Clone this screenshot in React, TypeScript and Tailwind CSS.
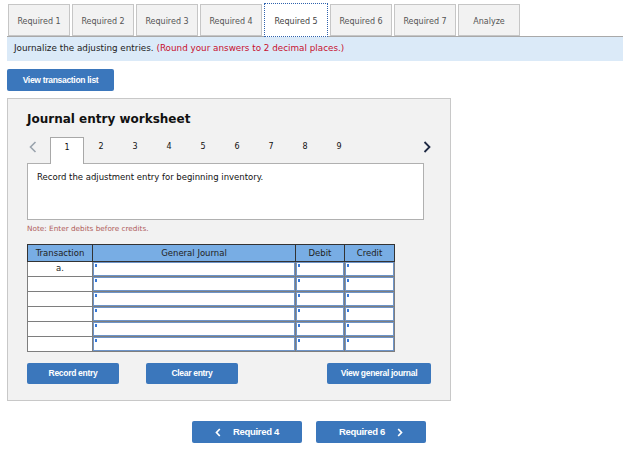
import React from 'react'

const TABS = ['Required 1', 'Required 2', 'Required 3', 'Required 4', 'Required 5', 'Required 6', 'Required 7', 'Analyze']
const ACTIVE_TAB = 4
const ENTRY_NUMS = [1, 2, 3, 4, 5, 6, 7, 8, 9]
const ROWS = ['a.', '', '', '', '', '']

const FONT = { fontFamily: '"DejaVu Sans", Verdana, sans-serif' }

function InputCell() {
  return (
    <td className="border border-[#7e7e7e] p-0 h-[15px]">
      <div className="relative h-[14px] border border-[#6d94c9] bg-white">
        <span className="absolute left-[1px] top-[1px] w-[2px] h-[3px] bg-[#3a79d6]" />
      </div>
    </td>
  )
}

function BlueButton({ label, className }: { label: string; className: string }) {
  return (
    <button
      className={`bg-[#3b77bc] text-white font-bold text-[8.5px] tracking-[-0.3px] rounded-[2px] flex items-center justify-center ${className}`}
      style={{ fontFamily: '"Liberation Sans", Arial, sans-serif' }}
    >
      {label}
    </button>
  )
}

export default function App() {
  return (
    <div className="w-[623px] h-[451px] bg-white pl-[7px]" style={FONT}>
      {/* tabs */}
      <div className="flex items-end gap-[2px] pl-[1px] pt-[3px] border-b border-[#a9a9a9] h-[37px]">
        {TABS.map((t, i) =>
          i === ACTIVE_TAB ? (
            <div
              key={t}
              className="w-[64px] h-[34px] -mb-[1px] bg-white border border-dotted border-[#2f62ad] flex items-center justify-center pt-[3px] text-[8px] text-[#444]"
            >
              {t}
            </div>
          ) : (
            <div
              key={t}
              className="w-[62px] h-[32px] bg-[#f2f2f2] border border-[#c6c6c6] flex items-center justify-center pt-[3px] text-[8px] text-[#555]"
            >
              {t}
            </div>
          )
        )}
      </div>

      {/* instructions */}
      <div className="h-[24px] bg-[#dbeaf8] flex items-center pl-[7px] text-[8.8px] text-[#222]">
        Journalize the adjusting entries.&nbsp;
        <span className="text-[#c8102e]">(Round your answers to 2 decimal places.)</span>
      </div>

      <div className="mt-[8px]">
        <BlueButton label="View transaction list" className="w-[107px] h-[22px]" />
      </div>

      {/* worksheet panel */}
      <div className="mt-[7px] w-[444px] h-[303px] bg-[#f2f2f2] border border-[#c8c8c8] pl-[19px] pr-[19px] pt-[14px]">
        <h2 className="text-[12px] font-bold text-[#111] leading-none h-[16px]">Journal entry worksheet</h2>

        <div className="mt-[7px] flex items-end h-[27px] w-[404px]">
          <div className="w-[23px] h-full flex items-center pl-[2px] pb-[6px]">
            <svg width="8" height="12" viewBox="0 0 8 12">
              <path d="M6.5 1 L1.5 6 L6.5 11" fill="none" stroke="#9aa3ad" strokeWidth="1.6" />
            </svg>
          </div>
          {ENTRY_NUMS.map((n) =>
            n === 1 ? (
              <div
                key={n}
                className="w-[34px] h-[27px] bg-white border border-b-0 border-[#a8a8a8] -mb-[1px] z-10 flex items-center justify-center pb-[6px] text-[8px] text-[#111]"
              >
                {n}
              </div>
            ) : (
              <div key={n} className="w-[34px] h-[27px] flex items-center justify-center pb-[6px] text-[8px] text-[#111]">
                {n}
              </div>
            )
          )}
          <div className="ml-auto w-[8px] h-full flex items-center justify-start pb-[6px]">
            <svg width="8" height="12" viewBox="0 0 8 12">
              <path d="M1.5 1 L6.5 6 L1.5 11" fill="none" stroke="#1f2a44" strokeWidth="1.8" />
            </svg>
          </div>
        </div>

        <div className="w-[397px] h-[57px] bg-white border border-[#b0b0b0] pl-[9px] pt-[7px] text-[8.5px] text-[#111]">
          Record the adjustment entry for beginning inventory.
        </div>

        <p className="mt-[3px] text-[7.3px] text-[#b0605c] leading-[12px]">Note: Enter debits before credits.</p>

        <table className="mt-[9px] border-collapse border border-[#6b6b6b] w-[367px] table-fixed text-[8.5px] text-[#222]">
          <colgroup>
            <col className="w-[65px]" />
            <col className="w-[203px]" />
            <col className="w-[49px]" />
            <col className="w-[50px]" />
          </colgroup>
          <thead>
            <tr className="bg-[#78ade4] h-[17px]">
              <th className="border border-[#333] font-normal p-0">Transaction</th>
              <th className="border border-[#333] font-normal p-0">General Journal</th>
              <th className="border border-[#333] font-normal p-0">Debit</th>
              <th className="border border-[#333] font-normal p-0">Credit</th>
            </tr>
          </thead>
          <tbody>
            {ROWS.map((r, i) => (
              <tr key={i} className="h-[15px]">
                <td className="border border-[#7e7e7e] bg-white text-center align-top leading-[13px] p-0">{r}</td>
                <InputCell />
                <InputCell />
                <InputCell />
              </tr>
            ))}
          </tbody>
        </table>

        <div className="mt-[11px] flex items-center">
          <BlueButton label="Record entry" className="w-[92px] h-[21px]" />
          <BlueButton label="Clear entry" className="ml-[27px] w-[92px] h-[21px]" />
          <BlueButton label="View general journal" className="ml-auto w-[104px] h-[21px]" />
        </div>
      </div>

      {/* bottom navigation */}
      <div className="mt-[20px] flex gap-[14px] pl-[185px]">
        <button
          className="w-[110px] h-[22px] bg-[#3b77bc] text-white font-bold text-[9.5px] tracking-[-0.3px] rounded-[2px] flex items-center justify-center gap-[12px]"
          style={{ fontFamily: '"Liberation Sans", Arial, sans-serif' }}
        >
          <svg width="6" height="9" viewBox="0 0 6 9">
            <path d="M4.8 1 L1.5 4.5 L4.8 8" fill="none" stroke="white" strokeWidth="1.7" />
          </svg>
          Required 4
        </button>
        <button
          className="w-[110px] h-[22px] bg-[#3b77bc] text-white font-bold text-[9.5px] tracking-[-0.3px] rounded-[2px] flex items-center justify-center gap-[12px]"
          style={{ fontFamily: '"Liberation Sans", Arial, sans-serif' }}
        >
          Required 6
          <svg width="6" height="9" viewBox="0 0 6 9">
            <path d="M1.2 1 L4.5 4.5 L1.2 8" fill="none" stroke="white" strokeWidth="1.7" />
          </svg>
        </button>
      </div>
    </div>
  )
}
